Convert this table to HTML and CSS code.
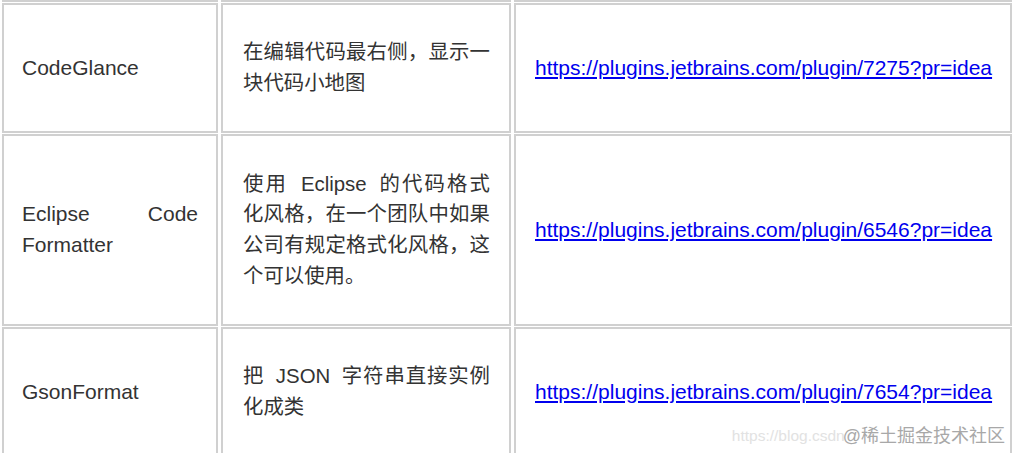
FILE: index.html
```html
<!DOCTYPE html>
<html lang="zh-CN">
<head>
<meta charset="utf-8">
<title>IDEA 插件</title>
<link rel="stylesheet" href="styles.css">
</head>
<body>
<div class="page">
  <table class="plugins">
    <tr class="prev">
      <td class="c1"></td><td class="c2"></td><td class="c3"></td>
    </tr>
    <tr class="r1">
      <td class="c1">CodeGlance</td>
      <td class="c2">在编辑代码最右侧，显示一块代码小地图</td>
      <td class="c3"><a href="#">https://plugins.jetbrains.com/plugin/7275?pr=idea</a></td>
    </tr>
    <tr class="r2">
      <td class="c1">Eclipse Code Formatter</td>
      <td class="c2">使用 Eclipse 的代码格式化风格，在一个团队中如果公司有规定格式化风格，这个可以使用。</td>
      <td class="c3"><a href="#">https://plugins.jetbrains.com/plugin/6546?pr=idea</a></td>
    </tr>
    <tr class="r3">
      <td class="c1">GsonFormat</td>
      <td class="c2">把 JSON 字符串直接实例化成类</td>
      <td class="c3"><a href="#">https://plugins.jetbrains.com/plugin/7654?pr=idea</a></td>
    </tr>
  </table>
  <div class="watermark"><span class="wm-url">https://blog.csdn</span><span class="wm-name">@稀土掘金技术社区</span></div>
</div>
</body>
</html>
```

FILE: styles.css
```css
html, body {
  margin: 0;
  padding: 0;
  background: #fff;
}

.page {
  position: relative;
  width: 1012px;
  height: 453px;
  overflow: hidden;
}

.plugins {
  border-collapse: separate;
  border-spacing: 3px 1px;
  margin: -1px 0 0 -1px;
  table-layout: fixed;
  width: 1016px;
  font-family: "Liberation Sans", Arial, "Noto Sans CJK SC", sans-serif;
  font-size: 21px;
  line-height: 30.75px;
  color: #333;
}

.plugins td {
  box-sizing: border-box;
  border: 2px solid #d0d0d0;
  padding: 0 18px 0 18px;
  vertical-align: middle;
  text-align: justify;
}

.plugins .c1 { width: 216px; }
.plugins .c2 {
  width: 290px;
  padding-left: 20px;
  padding-right: 19px;
  font-size: 20.4px;
  word-spacing: 5px;
}
.plugins .c3 { width: 498px; padding-left: 19px; padding-right: 8px; text-align: left; }

.plugins .prev td {
  height: 2px;
  border-top: none;
  padding: 0;
}

.plugins .r1 td { height: 130px; }
.plugins .r2 td { height: 192px; }
.plugins .r3 td { height: 130px; }

.plugins a {
  color: #0000ee;
  text-decoration: underline;
}

.watermark {
  position: absolute;
  right: 7px;
  bottom: 6px;
  font-family: "Liberation Sans", Arial, "Noto Sans CJK SC", sans-serif;
  line-height: 22px;
  white-space: nowrap;
  display: flex;
  align-items: center;
}

.wm-url {
  color: #e2e2e2;
  font-size: 15.5px;
}

.wm-name {
  color: #a8a8a8;
  font-size: 18px;
  margin-left: -2px;
}
```
